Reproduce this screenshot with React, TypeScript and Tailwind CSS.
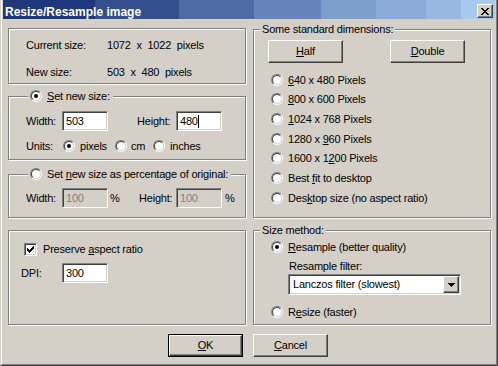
const CLOSE_X = ["##....##", ".##..##.", "..####..", "...##...", "..####..", ".##..##.", "##....##"];
const CHECK = ["......#", ".....##", "#...###", "##.###.", "#####..", ".###...", "..#...."];
const ARROW = ["#######", ".#####.", "..###..", "...#..."];

function Pix({ rows }: { rows: string[] }) {
  return (
    <svg width={rows[0].length} height={rows.length} shapeRendering="crispEdges" className="block">
      {rows.flatMap((r, y) =>
        [...r].map((c, x) => (c === "#" ? <rect key={`${x}-${y}`} x={x} y={y} width="1" height="1" fill="#000" /> : null))
      )}
    </svg>
  );
}

function Radio({ checked }: { checked?: boolean }) {
  return (
    <span className="relative inline-block w-[12px] h-[12px] shrink-0 rounded-full border border-t-[#808080] border-l-[#808080] border-b-white border-r-white">
      <span className="block w-full h-full rounded-full border border-t-[#404040] border-l-[#404040] border-b-[#d4d0c8] border-r-[#d4d0c8] bg-white" />
      {checked && <span className="absolute left-[3px] top-[3px] w-[4px] h-[4px] rounded-full bg-black" />}
    </span>
  );
}

function Field({ value, disabled, caret }: { value: string; disabled?: boolean; caret?: boolean }) {
  return (
    <div
      className={`h-[20px] w-[46px] shrink-0 flex items-center pl-[3px] border border-t-[#808080] border-l-[#808080] border-b-white border-r-white shadow-[inset_1px_1px_0_#404040,inset_-1px_-1px_0_#d4d0c8] ${
        disabled ? "bg-[#d4d0c8] text-[#808080]" : "bg-white"
      }`}
    >
      <span>{value}</span>
      {caret && <span className="w-px h-[13px] bg-black" />}
    </div>
  );
}

function Button({ children, def }: { children: React.ReactNode; def?: boolean }) {
  const face = (
    <div className="w-full h-full flex items-center justify-center border border-t-white border-l-white border-b-[#404040] border-r-[#404040] shadow-[inset_-1px_-1px_0_#808080]">
      {children}
    </div>
  );
  if (def) return <div className="w-[75px] h-[23px] border border-black">{face}</div>;
  return <div className="w-[75px] h-[23px]">{face}</div>;
}

// etched group frame
const group = "relative border border-[#808080] shadow-[inset_1px_1px_0_#fff,1px_1px_0_#fff]";

export default function App() {
  return (
    <div className="w-[498px] h-[366px] bg-[#d4d0c8] text-black text-[11px] tracking-[-0.2px] font-['Liberation_Sans',Arial,sans-serif] border-l border-r border-b border-l-[#d4d0c8] border-r-[#404040] border-b-[#404040]">
      <div className="h-full flex flex-col border-l border-r border-b border-l-white border-r-[#808080] border-b-[#808080]">
        {/* title bar */}
        <div className="mx-[1px] h-[19px] flex justify-between bg-[linear-gradient(to_right,#1f387b_0,#1f387b_92px,#33508d_92px,#33508d_176px,#4d6ba4_176px,#4d6ba4_251px,#6785ba_251px,#6785ba_318px,#7c9fcc_318px,#7c9fcc_373px,#8aaad7_373px,#8aaad7_423px,#98b8e2_423px,#98b8e2_458px,#a6caf0_458px)]">
          <span className="pl-[2px] pt-[5px] leading-[14px] text-[12px] font-bold text-white tracking-normal">Resize/Resample image</span>
          <div className="mt-[4px] mr-[2px] w-[16px] h-[14px] bg-[#d4d0c8] flex items-center justify-center border border-t-white border-l-white border-b-[#404040] border-r-[#404040] shadow-[inset_-1px_-1px_0_#808080]">
            <Pix rows={CLOSE_X} />
          </div>
        </div>

        <div className="flex gap-[7px] pl-[6px]">
          {/* left column */}
          <div className="flex flex-col">
            <div className={`${group} w-[238px] h-[56px] mt-[9px] pl-[17px] pt-[9px] grid grid-cols-[81px_auto] gap-y-[9px]`}>
              <span className="h-[14px] leading-[14px]">Current size:</span>
              <span className="h-[14px] leading-[14px] whitespace-pre">1072  x  1022  pixels</span>
              <span className="h-[14px] leading-[14px]">New size:</span>
              <span className="h-[14px] leading-[14px] whitespace-pre">503  x  480  pixels</span>
            </div>

            <div className={`${group} w-[238px] h-[64px] mt-[12px] pl-[17px] pt-[14px]`}>
              <div className="absolute left-[19px] -top-[8px] h-[14px] flex items-center gap-[5px] pl-[2px] pr-[3px] bg-[#d4d0c8]">
                <Radio checked />
                <span><span className="underline">S</span>et new size:</span>
              </div>
              <div className="flex items-center h-[20px]">
                <span className="w-[36px]">Width:</span>
                <Field value="503" />
                <span className="ml-[29px] w-[39px]">Height:</span>
                <Field value="480" caret />
              </div>
              <div className="flex items-center h-[14px] mt-[8px]">
                <span className="w-[37px]">Units:</span>
                <span className="w-[52px] flex items-center gap-[5px]"><Radio checked />pixels</span>
                <span className="w-[38px] flex items-center gap-[4px]"><Radio />cm</span>
                <span className="flex items-center gap-[5px]"><Radio />inches</span>
              </div>
            </div>

            <div className={`${group} w-[238px] h-[44px] mt-[14px] pl-[17px] pt-[13px]`}>
              <div className="absolute left-[19px] -top-[8px] h-[14px] flex items-center gap-[5px] pl-[2px] pr-[3px] bg-[#d4d0c8]">
                <Radio />
                <span>Set <span className="underline">n</span>ew size as percentage of original:</span>
              </div>
              <div className="flex items-center h-[20px]">
                <span className="w-[36px]">Width:</span>
                <Field value="100" disabled />
                <span className="w-[31px] pl-[2px]">%</span>
                <span className="w-[37px]">Height:</span>
                <Field value="100" disabled />
                <span className="pl-[3px]">%</span>
              </div>
            </div>

            <div className={`${group} w-[238px] h-[95px] mt-[12px] pl-[12px] pt-[12px]`}>
              <div className="ml-[3px] flex items-center gap-[6px] h-[13px]">
                <span className="w-[13px] h-[13px] shrink-0 flex items-center justify-center bg-white border border-t-[#808080] border-l-[#808080] border-b-white border-r-white shadow-[inset_1px_1px_0_#404040,inset_-1px_-1px_0_#d4d0c8]">
                  <Pix rows={CHECK} />
                </span>
                <span>Preserve <span className="underline">a</span>spect ratio</span>
              </div>
              <div className="flex items-center h-[20px] mt-[7px]">
                <span className="w-[41px]">DPI:</span>
                <Field value="300" />
              </div>
            </div>
          </div>

          {/* right column */}
          <div className="flex flex-col">
            <div className={`${group} w-[238px] h-[189px] mt-[10px] pl-[14px] pt-[10px]`}>
              <div className="absolute left-[6px] -top-[8px] h-[14px] flex items-center px-[2px] bg-[#d4d0c8]">
                Some standard dimensions:
              </div>
              <div className="flex gap-[32px] h-[23px]">
                <div className="w-[90px]"><Button><span><span className="underline">H</span>alf</span></Button></div>
                <div className="w-[90px]"><Button><span><span className="underline">D</span>ouble</span></Button></div>
              </div>
              <div className="mt-[7px] ml-[3px] flex flex-col">
                {[
                  ["6", "40 x 480 Pixels"],
                  ["8", "00 x 600 Pixels"],
                  ["1", "024 x 768 Pixels"],
                ].map(([u, rest]) => (
                  <div key={rest} className="h-[19.67px] flex items-center gap-[5px]">
                    <Radio />
                    <span><span className="underline">{u}</span>{rest}</span>
                  </div>
                ))}
                <div className="h-[19.67px] flex items-center gap-[5px]">
                  <Radio />
                  <span>1280 x <span className="underline">9</span>60 Pixels</span>
                </div>
                <div className="h-[19.67px] flex items-center gap-[5px]">
                  <Radio />
                  <span>1600 x 1<span className="underline">2</span>00 Pixels</span>
                </div>
                <div className="h-[19.67px] flex items-center gap-[5px]">
                  <Radio />
                  <span>Best <span className="underline">f</span>it to desktop</span>
                </div>
                <div className="h-[19.67px] flex items-center gap-[5px]">
                  <Radio />
                  <span>Des<span className="underline">k</span>top size (no aspect ratio)</span>
                </div>
              </div>
            </div>

            <div className={`${group} w-[238px] h-[95px] mt-[12px] pl-[17px] pt-[9px]`}>
              <div className="absolute left-[6px] -top-[8px] h-[14px] flex items-center px-[2px] bg-[#d4d0c8]">
                Size method:
              </div>
              <div className="h-[14px] flex items-center gap-[5px]">
                <Radio checked />
                <span><span className="underline">R</span>esample (better quality)</span>
              </div>
              <div className="h-[14px] mt-[5px] ml-[18px] flex items-center">Resample filter:</div>
              <div className="mt-[1px] ml-[17px] w-[173px] h-[21px] flex bg-white border border-t-[#808080] border-l-[#808080] border-b-white border-r-white shadow-[inset_1px_1px_0_#404040,inset_-1px_-1px_0_#d4d0c8] p-[1px]">
                <span className="flex-1 flex items-center pl-[3px]">Lanczos filter (slowest)</span>
                <span className="w-[16px] h-full bg-[#d4d0c8] flex items-center justify-center border border-t-white border-l-white border-b-[#404040] border-r-[#404040] shadow-[inset_-1px_-1px_0_#808080]">
                  <Pix rows={ARROW} />
                </span>
              </div>
              <div className="h-[14px] mt-[10px] flex items-center gap-[5px]">
                <Radio />
                <span>R<span className="underline">e</span>size (faster)</span>
              </div>
            </div>
          </div>
        </div>

        {/* dialog buttons */}
        <div className="flex gap-[10px] pl-[166px] mt-[9px]">
          <Button def><span><span className="underline">O</span>K</span></Button>
          <Button><span><span className="underline">C</span>ancel</span></Button>
        </div>
      </div>
    </div>
  );
}
